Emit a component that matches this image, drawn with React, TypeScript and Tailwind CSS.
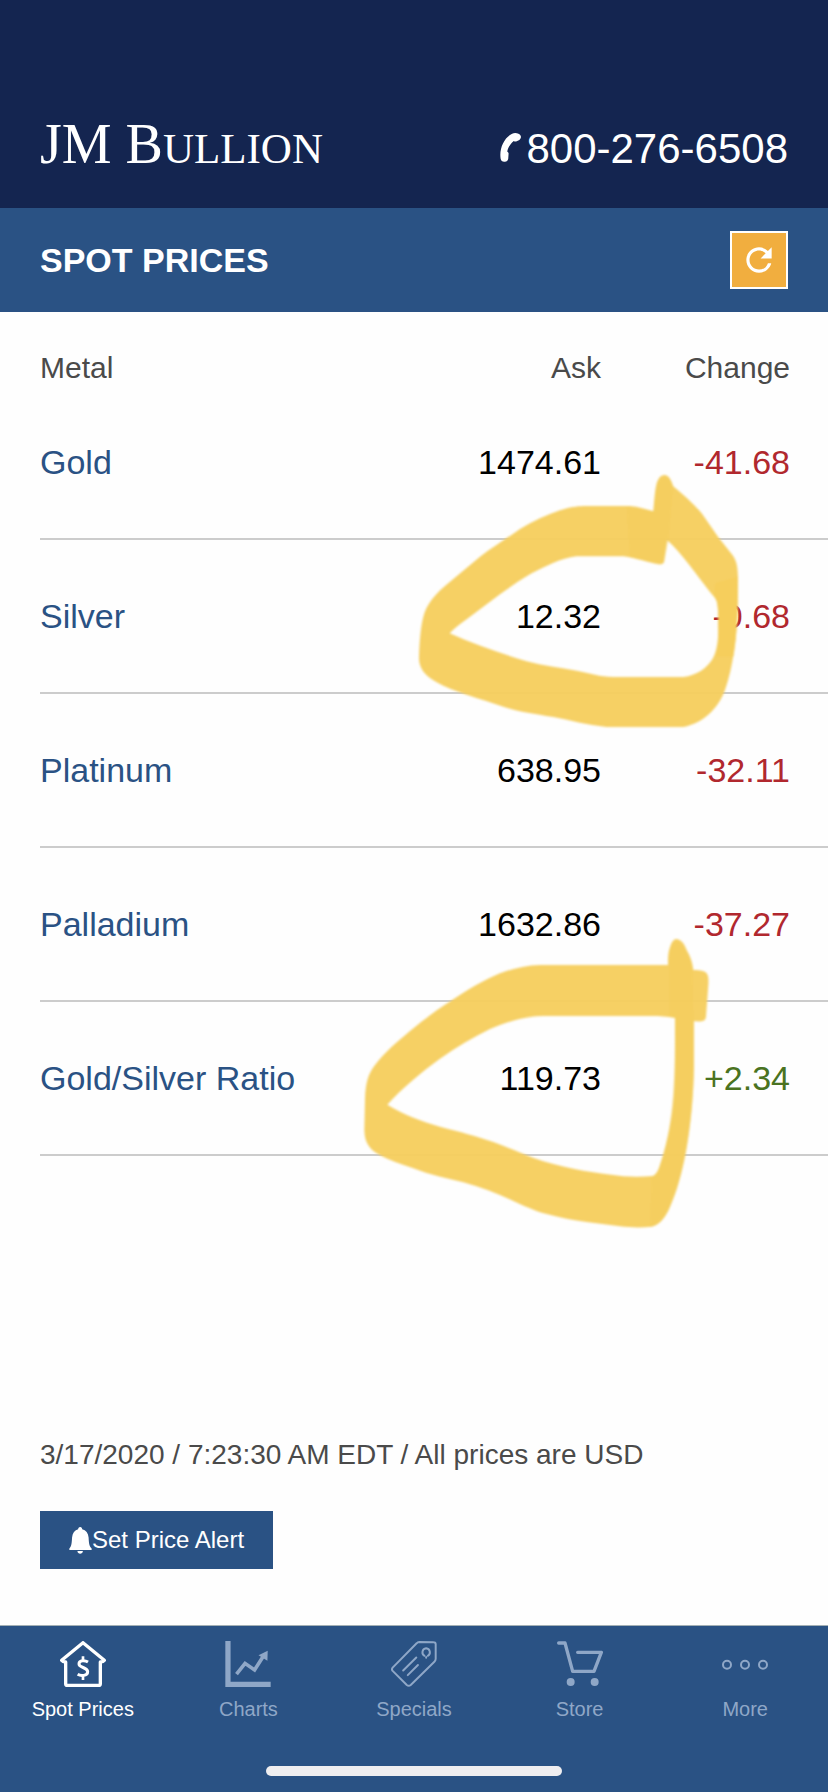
import React from "react";
import { MdRefresh } from "react-icons/md";

type Quote = { metal: string; ask: string; change: string };

const quotes: Quote[] = [
  { metal: "Gold", ask: "1474.61", change: "-41.68" },
  { metal: "Silver", ask: "12.32", change: "-0.68" },
  { metal: "Platinum", ask: "638.95", change: "-32.11" },
  { metal: "Palladium", ask: "1632.86", change: "-37.27" },
  { metal: "Gold/Silver Ratio", ask: "119.73", change: "+2.34" },
];

function PhoneIcon() {
  return (
    <svg viewBox="112 126 70 94" className="h-[31px] w-[23px]" fill="currentColor" aria-hidden="true">
      <path d="M152 131 C160 127 174 129 178 137 C180 143 178 147 174 150 L166 154 C162 156 159 155 157 153 C148 160 140 172 137 185 C140 187 142 190 141 194 L140 208 C139 213 135 216 130 216 C123 217 118 213 117 207 C112 176 128 142 152 131 Z" />
    </svg>
  );
}

function BellIcon() {
  return (
    <svg viewBox="206 318 68 80" className="h-[27px] w-[23px]" fill="currentColor" aria-hidden="true">
      <path d="M239 318 C243 318 245 321 245 325 C256 328 263 336 264 349 C265 365 265 373 273 382 L273 386 L207 386 L207 382 C214 373 214 365 215 349 C216 336 223 328 233 325 C233 321 235 318 239 318 Z" />
      <path d="M231 389 H247 C247 394 243 397 239 397 C235 397 231 394 231 389 Z" />
    </svg>
  );
}

const iconClass = "h-[46px] w-[46px]";

function HomeIcon() {
  return (
    <svg viewBox="175 63 138 138" className={iconClass} fill="none" stroke="currentColor" strokeLinejoin="round" strokeLinecap="round" aria-hidden="true">
      <path strokeWidth="10" d="M244 68 L180 121 Q183 126 192 126 V191 Q192 196 197 196 H291 Q296 196 296 191 V126 Q305 126 308 121 Z" />
      <path strokeWidth="9" strokeLinecap="butt" d="M259 126 C251 121 232 119 232 132 C232 144 258 141 258 155 C258 169 236 168 228 163" />
      <path strokeWidth="8" strokeLinecap="butt" d="M244 109 V123 M244 166 V180" />
    </svg>
  );
}

function ChartIcon() {
  return (
    <svg viewBox="672 63 138 140" className={iconClass} aria-hidden="true">
      <path fill="currentColor" d="M672 63 H688 V187 H810 V203 H672 Z" />
      <path fill="none" stroke="currentColor" strokeWidth="11" d="M706 164 L732 131 L761 151 L789 107" />
      <path fill="currentColor" d="M801 93 L800 123 L773 106 Z" />
    </svg>
  );
}

function TagIcon() {
  return (
    <svg viewBox="60 63 140 140" className={iconClass} fill="none" stroke="currentColor" strokeWidth="6" strokeLinejoin="round" strokeLinecap="round" aria-hidden="true">
      <path d="M146 66 L190 67 Q196 67 196 73 V117 Q196 122 192 126 L120 197 Q114 202 108 197 L65 154 Q61 149 65 144 L138 70 Q141 66 146 66 Z" />
      <path d="M137 113 L97 153 M142 136 L111 167" />
      <path d="M162 108 C152 103 154 87 167 85 C180 87 182 103 172 108" />
      <path d="M167 112 V114" />
    </svg>
  );
}

function CartIcon() {
  return (
    <svg viewBox="559 63 138 138" className={iconClass} fill="none" stroke="currentColor" strokeWidth="10" strokeLinejoin="round" strokeLinecap="round" aria-hidden="true">
      <path d="M564 69 H583 L606 154 H670 L692 97 H621" />
      <circle cx="600" cy="186" r="12" fill="currentColor" stroke="none" />
      <circle cx="672" cy="186" r="12" fill="currentColor" stroke="none" />
    </svg>
  );
}

function MoreIcon() {
  return (
    <svg viewBox="1053 66 138 138" className={iconClass} fill="none" stroke="currentColor" strokeWidth="6" aria-hidden="true">
      <circle cx="1068" cy="137" r="12" />
      <circle cx="1122" cy="137" r="12" />
      <circle cx="1176" cy="137" r="12" />
    </svg>
  );
}

const tabs = [
  { label: "Spot Prices", icon: <HomeIcon />, active: true },
  { label: "Charts", icon: <ChartIcon />, active: false },
  { label: "Specials", icon: <TagIcon />, active: false },
  { label: "Store", icon: <CartIcon />, active: false },
  { label: "More", icon: <MoreIcon />, active: false },
];

/* Highlighter strokes drawn over the silver row. */
function SilverMark() {
  return (
    <svg viewBox="0 0 1284 900" className="pointer-events-none absolute top-[138px] right-0 h-[300px] w-[428px]" aria-hidden="true">
      <defs>
        <filter id="softSilver" x="-5%" y="-5%" width="110%" height="110%">
          <feGaussianBlur stdDeviation="2.5" />
        </filter>
      </defs>
      <g filter="url(#softSilver)">
        <path
          fill="#f6ce5f"
          fillOpacity="0.97"
          d="M795 75 C808 78 814 90 819 108 C848 132 880 160 905 190 L955 262 L995 312 C1010 330 1013 350 1014 380 L1013 480 C1010 560 1000 650 975 720 C955 775 910 820 850 831 L620 831 C560 825 510 810 460 801 C400 791 360 786 310 770 C240 747 160 725 110 697 C75 678 57 655 57 625 C58 580 62 530 70 500 C78 465 105 430 150 395 L240 320 C280 290 320 265 360 237 C400 212 440 195 480 181 C510 171 530 169 550 168 L690 168 C715 170 740 178 760 184 C763 150 764 125 769 105 C773 86 782 74 795 75 Z M801 270 C798 290 795 310 792 334 C790 343 783 344 775 343 C745 338 710 325 670 319 L530 319 C480 325 440 348 395 370 C360 390 330 412 300 433 L200 508 C180 523 162 535 149 550 C220 582 300 610 380 634 C430 648 480 653 530 662 C570 670 600 680 640 681 L850 681 C890 677 920 655 937 628 C950 605 954 575 955 545 L954 480 C953 460 950 448 940 438 C915 408 895 380 868 345 C845 315 825 292 801 270 Z"
          fillRule="evenodd"
        />
        <path
          fill="#f4cb59"
          fillOpacity="0.5"
          d="M680 172 L760 184 L770 105 C775 80 805 70 819 108 L805 270 L792 340 L690 322 Z"
        />
        <path
          fill="#f6ce5c"
          d="M946 400 L1014 380 L1013 480 C1011 530 1007 580 1000 620 L950 620 C954 590 955 560 955 545 L954 480 C953 455 950 448 942 438 Z"
        />
      </g>
    </svg>
  );
}

/* Highlighter strokes drawn over the ratio row. */
function RatioMark() {
  return (
    <svg viewBox="0 0 1464 990" className="pointer-events-none absolute top-[608px] right-0 h-[330px] w-[488px]" aria-hidden="true">
      <defs>
        <filter id="softRatio" x="-5%" y="-5%" width="110%" height="110%">
          <feGaussianBlur stdDeviation="2.5" />
        </filter>
      </defs>
      <g filter="url(#softRatio)">
        <path
          fill="#f6ce5f"
          fillOpacity="0.97"
          fillRule="evenodd"
          d="M1010 57 C1025 59 1033 72 1040 90 C1052 110 1058 130 1060 150 C1075 150 1090 151 1099 158 C1106 166 1106 180 1105 195 L1098 290 C1096 305 1085 305 1062 304 L1062 440 C1060 530 1052 620 1037 700 C1025 760 1010 815 990 860 C978 890 960 914 935 920 C900 924 870 922 840 919 L740 906 C700 901 660 893 620 882 C580 872 550 856 520 843 C470 820 420 800 370 787 C320 774 270 765 220 745 C180 731 145 720 115 703 C85 685 74 665 73 630 L75 540 C76 490 85 460 105 435 C135 395 170 368 210 333 C250 300 290 270 340 238 C390 205 430 181 480 160 C520 145 560 136 600 135 L984 135 C984 120 983 100 990 82 C995 65 1002 56 1010 57 Z M1005 294 C980 290 960 288 935 288 L610 288 C560 288 500 305 450 327 C400 351 350 382 300 416 C240 460 185 505 142 554 C190 583 240 602 300 620 C360 636 410 648 460 666 C510 684 560 707 610 724 C690 748 770 760 850 769 C880 771 910 771 938 768 C948 765 955 752 960 735 C985 660 1000 580 1003 500 C1006 440 1005 370 1005 294 Z"
        />
        <path
          fill="#f4cb59"
          fillOpacity="0.5"
          d="M988 100 C995 50 1030 50 1058 145 L1062 440 C1060 600 1030 780 990 860 C975 895 955 915 930 920 L935 770 C948 765 955 752 960 735 C1000 620 1006 480 1005 294 L988 286 Z"
        />
      </g>
    </svg>
  );
}

export default function App() {
  return (
    <div className="flex min-h-screen flex-col bg-[#fefefe] font-['Liberation_Sans',Arial,sans-serif] text-[#4a4a4a]">
      <header className="flex min-h-[208px] items-baseline justify-between bg-[#142550] px-10 pt-28 text-white">
        <a href="#home" className="font-['Liberation_Serif','Times_New_Roman',serif] text-[56px] leading-[64px]">
          JM B<span className="text-[43px]">ULLION</span>
        </a>
        <a href="tel:800-276-6508" className="flex items-baseline gap-1 text-[42px] leading-[48px]">
          <PhoneIcon />
          800-276-6508
        </a>
      </header>

      <div className="flex h-[104px] items-center justify-between bg-[#2a5284] px-10 text-white">
        <h1 className="text-[34px] leading-10 font-bold">SPOT PRICES</h1>
        <button type="button" aria-label="Refresh" className="flex h-[58px] w-[58px] items-center justify-center border-2 border-white bg-[#f1ae3f]">
          <MdRefresh className="h-[38px] w-[38px]" />
        </button>
      </div>

      <main className="relative flex flex-1 flex-col">
        <div className="pl-10">
          <table className="w-full border-separate border-spacing-0">
            <thead>
              <tr className="h-[74px] text-[30px] leading-9">
                <th scope="col" className="pt-[38px] pb-0 text-left align-top font-normal">Metal</th>
                <th scope="col" className="pt-[38px] pb-0 text-right align-top font-normal">Ask</th>
                <th scope="col" className="w-[227px] pt-[38px] pr-[38px] pb-0 text-right align-top font-normal">Change</th>
              </tr>
            </thead>
            <tbody>
              {quotes.map((q) => (
                <tr key={q.metal} className="h-[154px] text-[34px] leading-10">
                  <td className="border-b-2 border-[#cccccc] p-0">
                    <a href="#metal" className="text-[#2a5284]">{q.metal}</a>
                  </td>
                  <td className="border-b-2 border-[#cccccc] p-0 text-right text-black">{q.ask}</td>
                  <td
                    className={
                      q.change.startsWith("+")
                        ? "border-b-2 border-[#cccccc] pr-[38px] text-right text-[#4a7321]"
                        : "border-b-2 border-[#cccccc] pr-[38px] text-right text-[#b1282e]"
                    }
                  >
                    {q.change}
                  </td>
                </tr>
              ))}
            </tbody>
          </table>
        </div>

        <SilverMark />
        <RatioMark />

        <div className="mt-auto flex flex-col items-start gap-10 px-10 pb-14">
          <p className="text-[28px] leading-8">3/17/2020 / 7:23:30 AM EDT / All prices are USD</p>
          <button type="button" className="flex h-[58px] items-center bg-[#2a5284] px-[29px] text-2xl text-white">
            <BellIcon />
            Set Price Alert
          </button>
        </div>
      </main>

      <nav className="flex flex-col items-center border-t border-[#a3b0b5] bg-[#2a5284] pt-[15px] pb-4">
        <div className="grid w-full grid-cols-5">
          {tabs.map((t) => (
            <a
              key={t.label}
              href="#tab"
              className={t.active ? "flex flex-col items-center gap-2.5 text-white" : "flex flex-col items-center gap-2.5 text-[#8fa7c7]"}
            >
              {t.icon}
              <span className="text-xl leading-6">{t.label}</span>
            </a>
          ))}
        </div>
        <div className="mt-[45px] h-2.5 w-[296px] rounded-full bg-[#efeef0]" />
      </nav>
    </div>
  );
}
